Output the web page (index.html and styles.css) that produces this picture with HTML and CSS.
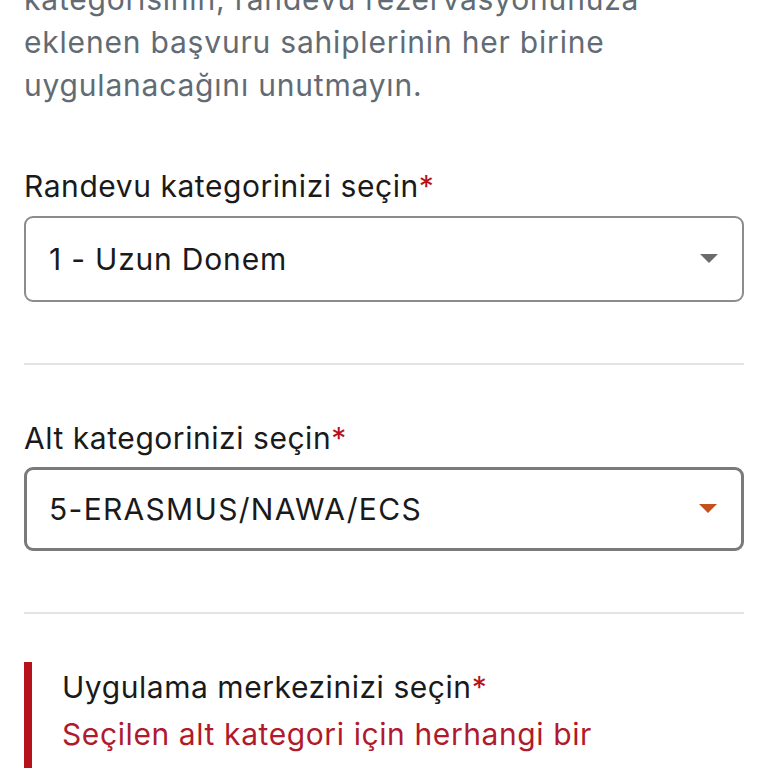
FILE: index.html
```html
<!DOCTYPE html>
<html lang="tr">
<head>
<meta charset="utf-8">
<link rel="stylesheet" href="styles.css">
</head>
<body>
<main class="page">
  <p class="intro">kategorisinin, randevu rezervasyonunuza eklenen başvuru sahiplerinin her birine uygulanacağını unutmayın.</p>

  <section class="field field-first">
    <label class="label">Randevu kategorinizi seçin<span class="req">*</span></label>
    <div class="select">
      <span class="value">1 - Uzun Donem</span>
      <svg class="caret" width="18" height="10" viewBox="0 0 18 10"><path d="M0 0 H18 L9 9 Z" fill="#6b6b6b"/></svg>
    </div>
  </section>

  <hr class="divider">

  <section class="field">
    <label class="label">Alt kategorinizi seçin<span class="req">*</span></label>
    <div class="select select-active">
      <span class="value value-code">5-ERASMUS/NAWA/ECS</span>
      <svg class="caret" width="18" height="10" viewBox="0 0 18 10"><path d="M0 0 H18 L9 9 Z" fill="#c4501c"/></svg>
    </div>
  </section>

  <hr class="divider">

  <section class="error-field">
    <label class="label">Uygulama merkezinizi seçin<span class="req">*</span></label>
    <p class="error-text">Seçilen alt kategori için herhangi bir uygulama merkezi bulunamadı.</p>
  </section>
</main>
</body>
</html>
```

FILE: styles.css
```css
html, body {
  margin: 0;
  padding: 0;
  background: #ffffff;
  overflow: hidden;
}
body {
  font-family: Inter, "Noto Sans", "Liberation Sans", sans-serif;
  color: #1a1a1a;
}
.page {
  padding: 0 24px;
  margin-top: -22px;
}
.intro {
  margin: 0;
  font-size: 30px;
  letter-spacing: 0.8px;
  line-height: 43px;
  color: #626b74;
  max-width: 650px;
}
.field {
  margin-top: 52px;
}
.field-first {
  margin-top: 58px;
}
.label {
  display: block;
  font-size: 30px;
  letter-spacing: 0.55px;
  line-height: 42px;
  color: #1a1a1a;
}
.req {
  color: #b5121b;
}
.select {
  margin-top: 9px;
  height: 86px;
  box-sizing: border-box;
  border: 2px solid #8c8c8c;
  border-radius: 9px;
  display: flex;
  align-items: center;
  justify-content: space-between;
  padding: 0 24px 0 23px;
}
.select-active {
  margin-top: 8px;
  height: 84px;
  border: 3px solid #7a7a7a;
  padding-left: 22px;
}
.value {
  font-size: 30px;
  letter-spacing: 0.8px;
  color: #1a1a1a;
}
.value-code {
  letter-spacing: 1.3px;
}
.caret {
  display: block;
}
.divider {
  margin: 61px 0 0;
  border: 0;
  height: 2px;
  background: #e4e4e4;
}
.error-field {
  margin-top: 48px;
  border-left: 8px solid #b5121b;
  padding: 4px 0 0 30px;
}
.error-text {
  margin: 3px 0 0;
  max-width: 640px;
  font-size: 30px;
  letter-spacing: 0.6px;
  line-height: 47px;
  color: #b01a2c;
}
```
